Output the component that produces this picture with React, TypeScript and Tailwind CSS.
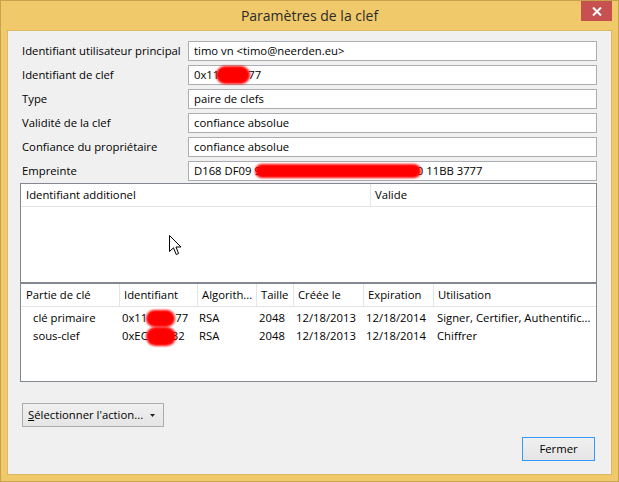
import React from 'react'

const fields: { label: string; value: React.ReactNode }[] = [
  { label: 'Identifiant utilisateur principal', value: 'timo vn <timo@neerden.eu>' },
  {
    label: 'Identifiant de clef',
    value: (
      <>
        0x11
        <Blot className="ml-[-3px] mr-[-2px] h-[18px] w-[34px]" />
        77
      </>
    ),
  },
  { label: 'Type', value: 'paire de clefs' },
  { label: 'Validité de la clef', value: 'confiance absolue' },
  { label: 'Confiance du propriétaire', value: 'confiance absolue' },
  {
    label: 'Empreinte',
    value: (
      <>
        D168 DF09 9
        <Blot className="ml-[-6px] mr-[-4px] h-[14px] w-[166px]" />
        0 11BB 3777
      </>
    ),
  },
]

// redaction marks from the original screenshot
function Blot({ className }: { className: string }) {
  return <span className={`inline-block shrink-0 rounded-full bg-[#ff0000] blur-[1px] ${className}`} />
}

function Cursor() {
  return (
    <svg className="absolute left-[148px] top-[51px]" width="13" height="21" viewBox="0 0 13 21">
      <path
        d="M0.5 0.5 L0.5 16.5 L4.5 12.8 L7.2 19.5 L9.6 18.5 L7 12 L12 12 Z"
        fill="white"
        stroke="black"
        strokeWidth="1"
        strokeLinejoin="miter"
      />
    </svg>
  )
}

const subkeyCols = [
  { title: 'Partie de clé', w: 'w-[99px]', pl: 'pl-[5px]' },
  { title: 'Identifiant', w: 'w-[78px]', pl: 'pl-[4px]' },
  { title: 'Algorith...', w: 'w-[59px]', pl: 'pl-[4px]' },
  { title: 'Taille', w: 'w-[37px]', pl: 'pl-[4px]' },
  { title: 'Créée le', w: 'w-[70px]', pl: 'pl-[4px]' },
  { title: 'Expiration', w: 'w-[70px]', pl: 'pl-[4px]' },
]

function SubkeyRow({
  part,
  id,
  usage,
}: {
  part: string
  id: React.ReactNode
  usage: string
}) {
  return (
    <div className="flex h-[18px] items-center whitespace-nowrap">
      <div className="w-[99px] pl-[12px]">{part}</div>
      <div className="flex w-[78px] items-center pl-[2px]">{id}</div>
      <div className="w-[59px] pl-[1px]">RSA</div>
      <div className="w-[37px] pl-[2px]">2048</div>
      <div className="w-[70px] pl-[2px]">12/18/2013</div>
      <div className="w-[70px] pl-[2px]">12/18/2014</div>
      <div className="flex-1 overflow-hidden pl-[3px]">{usage}</div>
    </div>
  )
}

export default function App() {
  return (
    <div className="flex h-[482px] w-[619px] flex-col border border-[#c9a24e] bg-[#f0c96b] font-['Open_Sans',sans-serif] text-[11.3px] text-black">
      <div className="relative flex h-[29px] shrink-0 items-center justify-center">
        <span className="text-[14px] text-[#2b2b2b]">Paramètres de la clef</span>
        <div className="absolute right-[6px] top-0 flex h-[20px] w-[31px] items-center justify-center bg-[#c75050]">
          <svg width="10" height="9" viewBox="0 0 10 9">
            <path d="M1 0.5 L9 8.5 M9 0.5 L1 8.5" stroke="white" strokeWidth="2" />
          </svg>
        </div>
      </div>

      <div className="mx-[6px] flex h-[445px] flex-col border border-[#dcb862] bg-[#f0f0f0] pl-[12px] pr-[14px] pt-[10px]">
        <div className="flex flex-col gap-[4px]">
          {fields.map((f) => (
            <div key={f.label} className="flex h-[20px]">
              <div className="flex w-[168px] items-center pl-[2px]">{f.label}</div>
              <div className="flex flex-1 items-center whitespace-nowrap border border-[#abadb3] bg-white pl-[5px]">
                {f.value}
              </div>
            </div>
          ))}
        </div>

        <div className="relative mt-[2px] h-[100px] border border-[#828790] bg-white">
          <div className="flex h-[23px] border-b border-[#e5e5e5]">
            <div className="flex w-[350px] items-center border-r border-[#e5e5e5] pl-[5px]">
              Identifiant additionel
            </div>
            <div className="flex flex-1 items-center pl-[4px]">Valide</div>
          </div>
          <Cursor />
        </div>

        <div className="h-[99px] border border-[#828790] bg-white">
          <div className="flex h-[23px] border-b border-[#e5e5e5]">
            {subkeyCols.map((c) => (
              <div
                key={c.title}
                className={`flex items-center border-r border-[#e5e5e5] ${c.w} ${c.pl}`}
              >
                {c.title}
              </div>
            ))}
            <div className="flex flex-1 items-center pl-[4px]">Utilisation</div>
          </div>
          <div className="pt-[2px]">
            <SubkeyRow
              part="clé primaire"
              id={
                <>
                  0x11
                  <Blot className="ml-[-1px] h-[17px] w-[29px]" />
                  77
                </>
              }
              usage="Signer, Certifier, Authentific..."
            />
            <SubkeyRow
              part="sous-clef"
              id={
                <>
                  0xEC
                  <Blot className="ml-[-2px] mr-[-4px] h-[19px] w-[30px]" />
                  32
                </>
              }
              usage="Chiffrer"
            />
          </div>
        </div>

        <button className="ml-[2px] mt-[21px] flex h-[24px] w-[142px] items-center border border-[#acacac] bg-gradient-to-b from-[#f0f0f0] to-[#e5e5e5] pl-[5px]">
          <span>
            <span className="underline">S</span>électionner l'action...
          </span>
          <svg className="ml-[7px]" width="5" height="3" viewBox="0 0 5 3">
            <path d="M0 0 L5 0 L2.5 3 Z" fill="#222" />
          </svg>
        </button>

        <button className="mr-[2px] mt-[10px] flex h-[24px] w-[73px] items-center justify-center self-end border border-[#3399ff] bg-gradient-to-b from-[#f0f0f0] to-[#e5e5e5]">
          Fermer
        </button>
      </div>
    </div>
  )
}
